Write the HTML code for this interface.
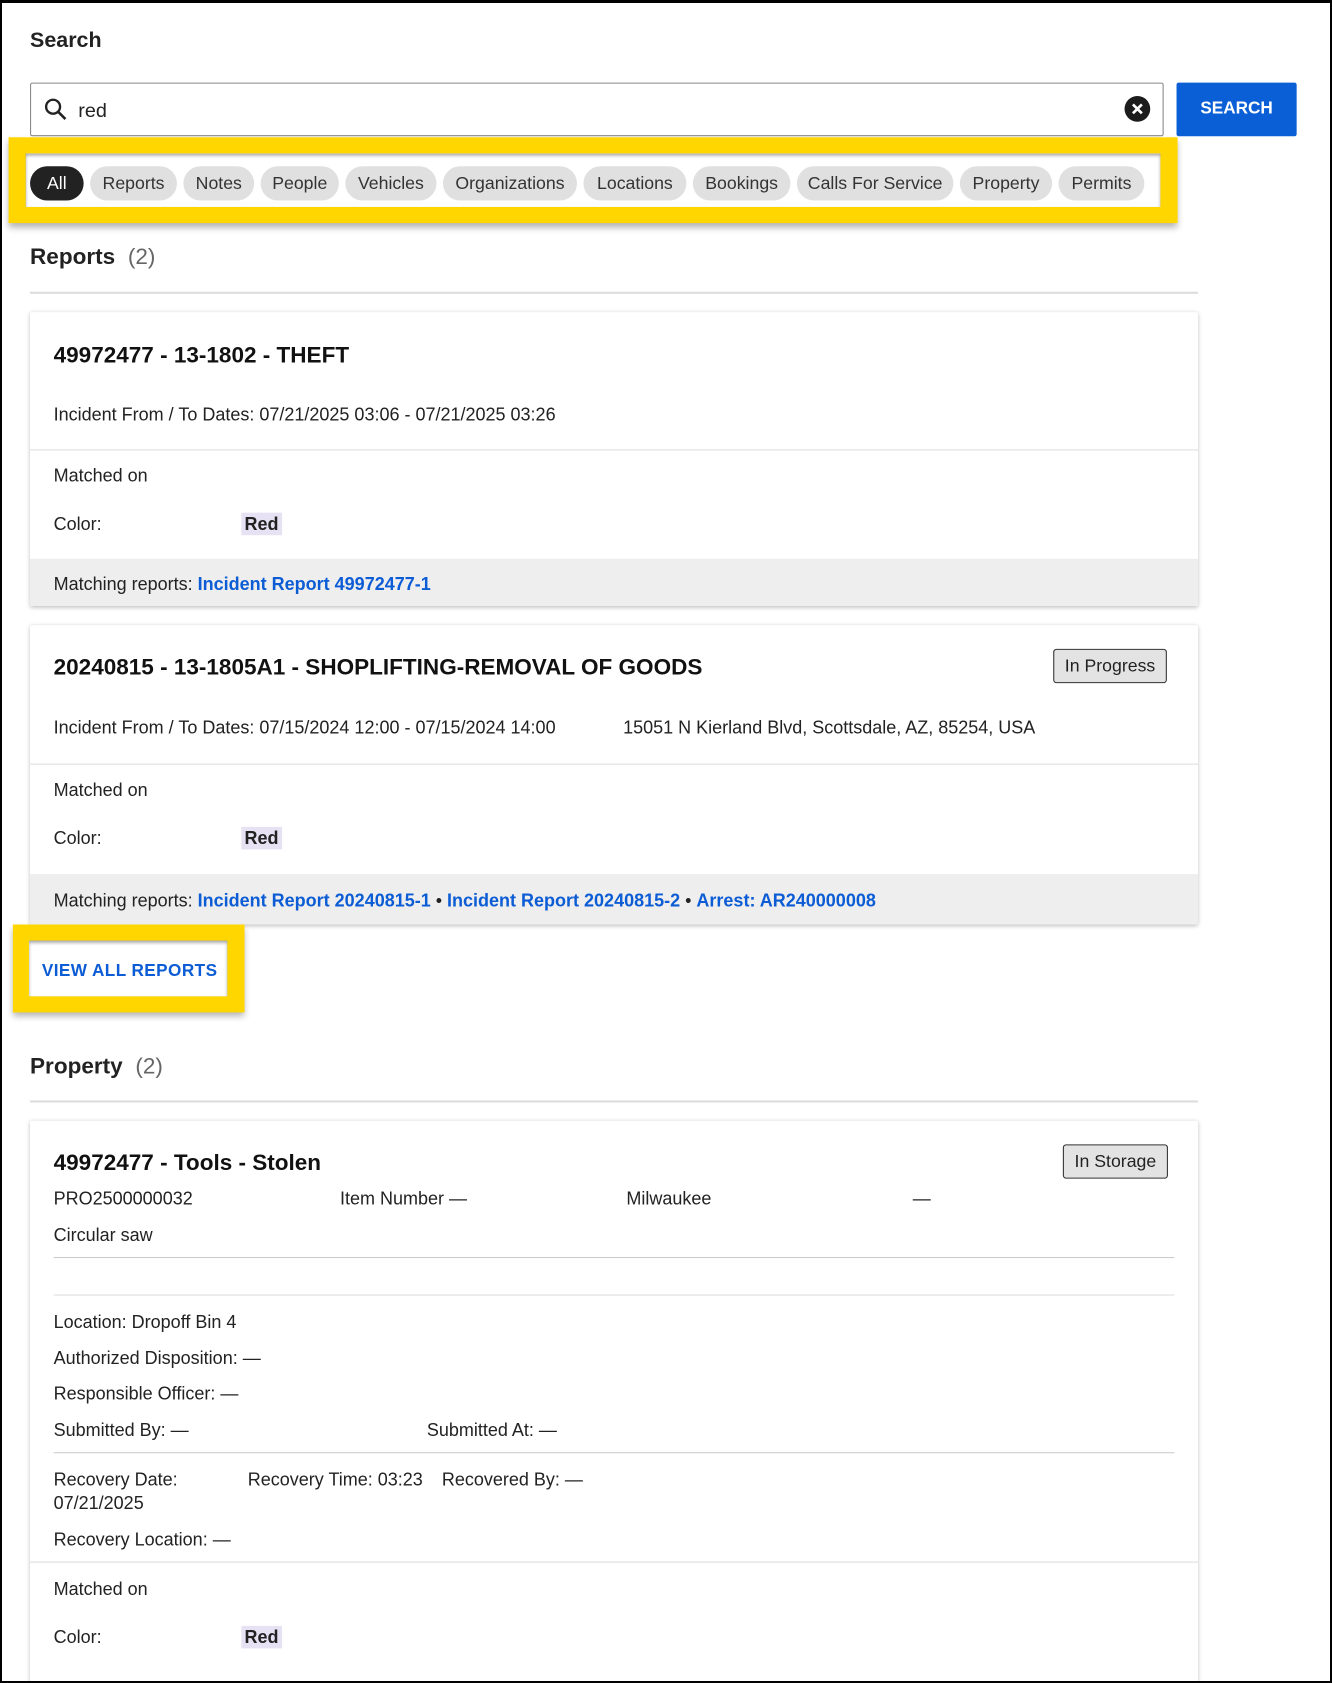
<!DOCTYPE html>
<html><head><meta charset="utf-8"><style>
html,body{margin:0;padding:0;background:#fff;}
body{width:1332px;height:1682px;overflow:hidden;position:relative;font-family:"Liberation Sans",Arial,sans-serif;color:#222;}
#frame{position:absolute;left:0;top:0;width:1328px;height:1678px;border:2px solid #000;border-top-width:3px;box-sizing:content-box;}
#s{position:absolute;left:0;top:0;width:1242px;height:1568px;transform:scale(1.0725);transform-origin:0 0;}
.a{position:absolute;white-space:nowrap;}
.t{font-size:16.8px;line-height:20px;margin-top:2px;}
.chip{position:absolute;top:155px;height:32px;line-height:33px;border-radius:16px;background:#e0e0e0;font-size:16.5px;color:#333;text-align:center;}
.card{position:absolute;left:28px;width:1089px;background:#fff;box-shadow:0 1px 4px rgba(0,0,0,.25);border-radius:2px;}
.hr{position:absolute;height:1px;background:#ddd;}
.red{background:#e6e2f3;font-weight:bold;padding:1px 3px;}
.lnk{color:#0b5cd5;font-weight:bold;}
.badge{position:absolute;border:1px solid #333;border-radius:3px;background:#e3e3e3;font-size:16.5px;line-height:30px;text-align:center;}
.h2{font-size:21px;line-height:26px;font-weight:bold;margin-top:2px;}
.title{font-size:21px;line-height:26px;font-weight:bold;color:#111;margin-top:2px;}
</style></head><body>
<div id="s">
<div class="a" style="left:28px;top:27px;font-size:20px;font-weight:bold;">Search</div>
<div class="a" style="left:28px;top:77px;width:1055px;height:48px;border:1px solid #888;border-radius:2px;"></div>
<svg class="a" style="left:40px;top:90px" width="24" height="24" viewBox="0 0 24 24"><circle cx="9.5" cy="9.5" r="6.5" fill="none" stroke="#222" stroke-width="2.2"/><line x1="14.5" y1="14.5" x2="21" y2="21" stroke="#222" stroke-width="2.4"/></svg>
<div class="a" style="left:73px;top:92px;font-size:18.5px;">red</div>
<svg class="a" style="left:1048px;top:89px" width="25" height="25" viewBox="0 0 24 24"><circle cx="12" cy="12" r="11.5" fill="#1c1c1c"/><path d="M8 8L16 16M16 8L8 16" stroke="#fff" stroke-width="2.4"/></svg>
<div class="a" style="left:1097px;top:77px;width:112px;height:50px;background:#0a5fd6;border-radius:2px;color:#fff;font-weight:bold;font-size:16px;line-height:50px;text-align:center;">SEARCH</div>
<div class="a" style="left:8px;top:128px;width:1090px;height:80px;background:#ffd600;box-shadow:0 4px 6px rgba(0,0,0,.3);"></div>
<div class="a" style="left:24px;top:143px;width:1058px;height:50px;background:#fff;box-shadow:inset 0 2px 3px rgba(0,0,0,.35);"></div>
<div class="chip" style="left:28px;width:50px;background:#222;color:#fff;">All</div>
<div class="chip" style="left:84px;width:81px;">Reports</div>
<div class="chip" style="left:171px;width:66px;">Notes</div>
<div class="chip" style="left:243px;width:73px;">People</div>
<div class="chip" style="left:322px;width:85px;">Vehicles</div>
<div class="chip" style="left:413px;width:125px;">Organizations</div>
<div class="chip" style="left:544px;width:96px;">Locations</div>
<div class="chip" style="left:646px;width:91px;">Bookings</div>
<div class="chip" style="left:743px;width:146px;">Calls For Service</div>
<div class="chip" style="left:895px;width:86px;">Property</div>
<div class="chip" style="left:987px;width:80px;">Permits</div>

<div class="a h2" style="left:28px;top:225px;">Reports <span style="color:#666;margin-left:6px;font-weight:normal">(2)</span></div>
<div class="hr" style="left:28px;top:272px;width:1089px;height:2px;"></div>

<div class="card" style="top:291px;height:274px;">
 <div class="a title" style="left:22px;top:26px;">49972477 - 13-1802 - THEFT</div>
 <div class="a t" style="left:22px;top:84px;">Incident From / To Dates: 07/21/2025 03:06 - 07/21/2025 03:26</div>
 <div class="hr" style="left:0;top:128px;width:1089px;"></div>
 <div class="a t" style="left:22px;top:141px;">Matched on</div>
 <div class="a t" style="left:22px;top:186px;">Color:</div>
 <div class="a t" style="left:197px;top:186px;"><span class="red">Red</span></div>
 <div class="a" style="left:0;top:230px;width:1089px;height:44px;background:#eee;"></div>
 <div class="a t" style="left:22px;top:242px;">Matching reports: <span class="lnk">Incident Report 49972477-1</span></div>
</div>

<div class="card" style="top:583px;height:279px;">
 <div class="a title" style="left:22px;top:25px;">20240815 - 13-1805A1 - SHOPLIFTING-REMOVAL OF GOODS</div>
 <div class="badge" style="left:954px;top:22px;width:104px;">In Progress</div>
 <div class="a t" style="left:22px;top:84px;">Incident From / To Dates: 07/15/2024 12:00 - 07/15/2024 14:00</div>
 <div class="a t" style="left:553px;top:84px;">15051 N Kierland Blvd, Scottsdale, AZ, 85254, USA</div>
 <div class="hr" style="left:0;top:129px;width:1089px;"></div>
 <div class="a t" style="left:22px;top:142px;">Matched on</div>
 <div class="a t" style="left:22px;top:187px;">Color:</div>
 <div class="a t" style="left:197px;top:187px;"><span class="red">Red</span></div>
 <div class="a" style="left:0;top:232px;width:1089px;height:47px;background:#eee;"></div>
 <div class="a t" style="left:22px;top:245px;">Matching reports: <span class="lnk">Incident Report 20240815-1</span> • <span class="lnk">Incident Report 20240815-2</span> • <span class="lnk">Arrest: AR240000008</span></div>
</div>

<div class="a" style="left:12px;top:862px;width:216px;height:82px;background:#ffd600;box-shadow:0 4px 6px rgba(0,0,0,.3);"></div>
<div class="a" style="left:27px;top:877px;width:185px;height:52px;background:#fff;box-shadow:inset 0 2px 3px rgba(0,0,0,.35);"></div>
<div class="a" style="left:39px;top:897px;font-size:16px;font-weight:bold;color:#0b5cd5;letter-spacing:0.4px;">VIEW ALL REPORTS</div>

<div class="a h2" style="left:28px;top:980px;">Property <span style="color:#666;margin-left:6px;font-weight:normal">(2)</span></div>
<div class="hr" style="left:28px;top:1026px;width:1089px;height:2px;"></div>

<div class="card" style="top:1045px;height:523px;">
 <div class="a title" style="left:22px;top:25px;">49972477 - Tools - Stolen</div>
 <div class="badge" style="left:963px;top:22px;width:96px;">In Storage</div>
 <div class="a t" style="left:22px;top:61px;">PRO2500000032</div>
 <div class="a t" style="left:289px;top:61px;">Item Number —</div>
 <div class="a t" style="left:556px;top:61px;">Milwaukee</div>
 <div class="a t" style="left:823px;top:61px;">—</div>
 <div class="a t" style="left:22px;top:95px;">Circular saw</div>
 <div class="hr" style="left:22px;top:127px;width:1045px;background:#ccc;"></div>
 <div class="hr" style="left:22px;top:162px;width:1045px;"></div>
 <div class="a t" style="left:22px;top:176px;">Location: Dropoff Bin 4</div>
 <div class="a t" style="left:22px;top:210px;">Authorized Disposition: —</div>
 <div class="a t" style="left:22px;top:243px;">Responsible Officer: —</div>
 <div class="a t" style="left:22px;top:277px;">Submitted By: —</div>
 <div class="a t" style="left:370px;top:277px;">Submitted At: —</div>
 <div class="hr" style="left:22px;top:309px;width:1045px;background:#ccc;"></div>
 <div class="a t" style="left:22px;top:323px;">Recovery Date:</div>
 <div class="a t" style="left:22px;top:345px;">07/21/2025</div>
 <div class="a t" style="left:203px;top:323px;">Recovery Time: 03:23</div>
 <div class="a t" style="left:384px;top:323px;">Recovered By: —</div>
 <div class="a t" style="left:22px;top:379px;">Recovery Location: —</div>
 <div class="hr" style="left:0;top:411px;width:1089px;"></div>
 <div class="a t" style="left:22px;top:425px;">Matched on</div>
 <div class="a t" style="left:22px;top:470px;">Color:</div>
 <div class="a t" style="left:197px;top:470px;"><span class="red">Red</span></div>
</div>
</div>
<div id="frame"></div>
</body></html>
